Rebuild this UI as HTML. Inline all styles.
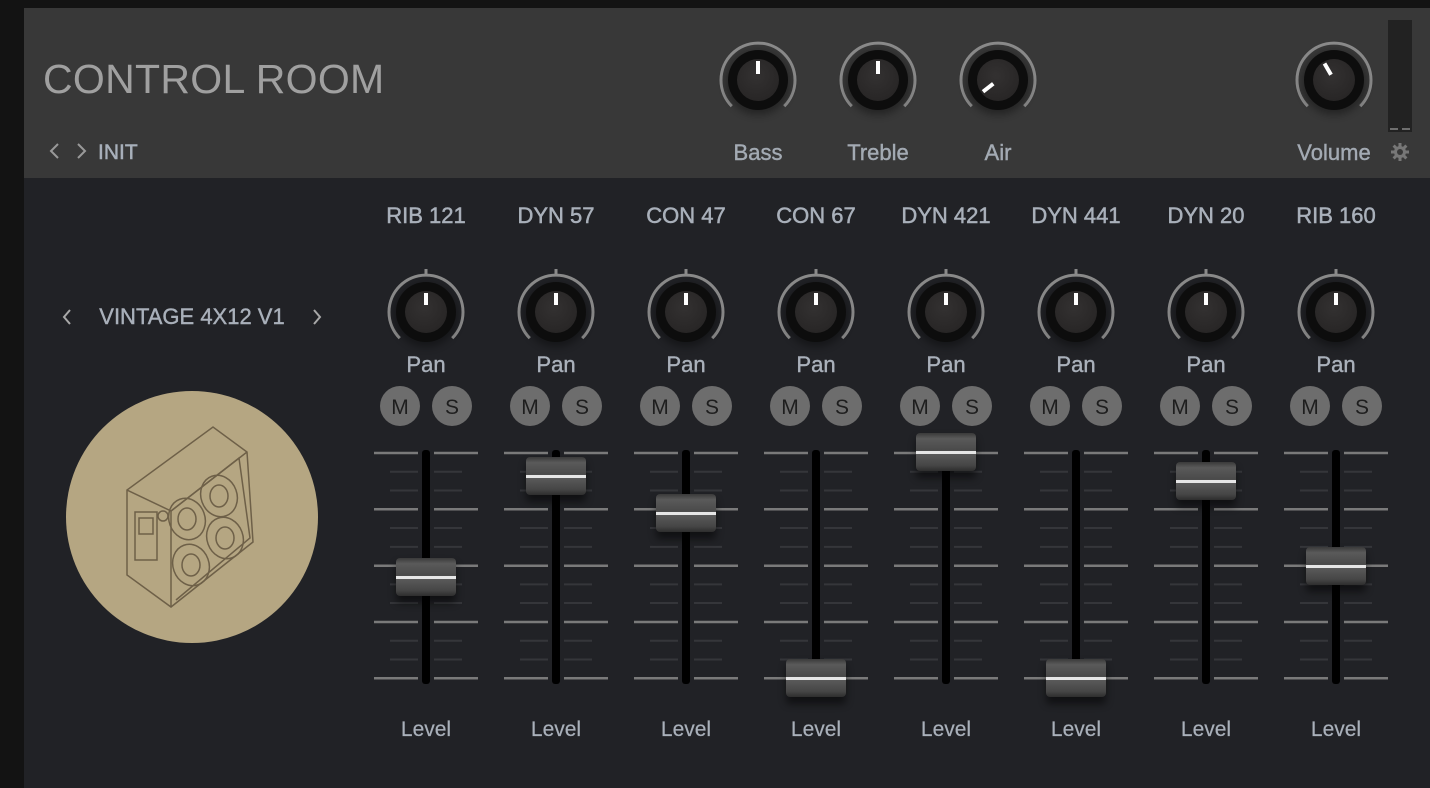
<!DOCTYPE html>
<html><head><meta charset="utf-8"><style>
html,body{margin:0;padding:0;background:#131313;}
body{width:1430px;height:788px;overflow:hidden;position:relative;font-family:"Liberation Sans",sans-serif;}
svg{position:absolute;left:0;top:0;}
</style></head><body>
<svg width="1430" height="788" viewBox="0 0 1430 788" xmlns="http://www.w3.org/2000/svg" font-family="Liberation Sans, sans-serif">
<defs>
<radialGradient id="cap" cx="0.45" cy="0.4" r="0.7"><stop offset="0" stop-color="#333131"/><stop offset="1" stop-color="#262424"/></radialGradient>
<linearGradient id="fc" x1="0" y1="0" x2="0" y2="1"><stop offset="0" stop-color="#3a3a3a"/><stop offset="0.15" stop-color="#5a5a5a"/><stop offset="0.45" stop-color="#4a4a4a"/><stop offset="0.55" stop-color="#5a5a5a"/><stop offset="0.85" stop-color="#464646"/><stop offset="1" stop-color="#2e2e2e"/></linearGradient>
<filter id="sh" x="-50%" y="-50%" width="200%" height="200%"><feGaussianBlur stdDeviation="4"/></filter>
<g id="knob">
<path d="M -26.2 26.2 A 37 37 0 1 1 26.2 26.2" fill="none" stroke="#8a8a8a" stroke-width="3"/>
<circle r="32" fill="#000" opacity="0.35" filter="url(#sh)" cy="3"/>
<circle r="30" fill="#0d0d0d"/>
<circle r="21" fill="url(#cap)"/>
</g>
<g id="pk"><use href="#knob"/><line x1="0" y1="-43" x2="0" y2="-37" stroke="#8a8a8a" stroke-width="3"/><rect x="-2" y="-19" width="4" height="12" fill="#fff"/></g>
<g id="fd">
<g stroke="#7a7a7a" stroke-width="2.5">
<path d="M-52 3H-8M8 3H52M-52 59.3H-8M8 59.3H52M-52 115.7H-8M8 115.7H52M-52 172H-8M8 172H52M-52 228.3H-8M8 228.3H52"/>
</g>
<g stroke="#35363a" stroke-width="2">
<path d="M-36 21.8H-8M8 21.8H36M-36 40.5H-8M8 40.5H36M-36 78H-8M8 78H36M-36 96.9H-8M8 96.9H36M-36 134.4H-8M8 134.4H36M-36 153H-8M8 153H36M-36 190.8H-8M8 190.8H36M-36 209.5H-8M8 209.5H36"/>
</g>
<rect x="-4" y="0" width="8" height="234" rx="3" fill="#000"/>
</g>
<g id="cap2">
<rect x="-30" y="-14" width="60" height="40" rx="4" fill="#000" opacity="0.5" filter="url(#sh)"/>
<rect x="-30" y="-19" width="60" height="38" rx="4" fill="url(#fc)"/>
<rect x="-30" y="-1" width="60" height="3" fill="#e6e6e6"/>
</g>
<g id="ms">
<circle cx="-26" r="20" fill="#6d6d6d"/><circle cx="26" r="20" fill="#6d6d6d"/>
<text x="-26" y="8" text-anchor="middle" font-size="21" fill="#1e1e1e">M</text>
<text x="26" y="8" text-anchor="middle" font-size="21" fill="#1e1e1e">S</text>
</g>
</defs>
<rect x="0" y="0" width="1430" height="788" fill="#131313"/>
<rect x="24" y="8" width="1406" height="170" fill="#383838"/>
<rect x="24" y="178" width="1406" height="610" fill="#212226"/>
<text x="43" y="93" font-size="41" fill="#a0a0a0" letter-spacing="0.3">CONTROL ROOM</text>
<path d="M58 144L51 151L58 158M78 144L85 151L78 158" stroke="#999" stroke-width="2" fill="none"/>
<text x="98" y="159" font-size="21" fill="#a8b0bb" stroke="#a8b0bb" stroke-width="0.5">INIT</text>
<g transform="translate(758,80)"><use href="#knob"/><rect x="-2" y="-19" width="4" height="13" fill="#fff"/></g>
<g transform="translate(878,80)"><use href="#knob"/><rect x="-2" y="-19" width="4" height="13" fill="#fff"/></g>
<g transform="translate(998,80)"><use href="#knob"/><rect x="-2" y="-19" width="4" height="13" fill="#fff" transform="rotate(-128)"/></g>
<g transform="translate(1334,80)"><use href="#knob"/><rect x="-2" y="-19" width="4" height="13" fill="#fff" transform="rotate(-30)"/></g>
<g font-size="22" fill="#a3aab3" stroke="#a3aab3" stroke-width="0.4" text-anchor="middle">
<text x="758" y="160">Bass</text><text x="878" y="160">Treble</text><text x="998" y="160">Air</text><text x="1334" y="160">Volume</text>
</g>
<rect x="1388" y="20" width="24" height="112" fill="#222"/>
<path d="M1390 129H1398M1402 129H1410" stroke="#888" stroke-width="1.5"/>
<g transform="translate(1400,152)" fill="#777"><circle r="6"/><g stroke="#777" stroke-width="3"><path d="M0 -9V9M-9 0H9M-6.4 -6.4L6.4 6.4M-6.4 6.4L6.4 -6.4"/></g><circle r="3" fill="#383838"/></g>

<path d="M70 310L64 317L70 324M314 310L320 317L314 324" stroke="#a8a8a8" stroke-width="2" fill="none"/>
<text x="192" y="324" font-size="22" fill="#a9b0ba" stroke="#a9b0ba" stroke-width="0.4" text-anchor="middle">VINTAGE 4X12 V1</text>
<circle cx="192" cy="517" r="126" fill="#b5a682"/>
<g fill="none" stroke="#6e6048" stroke-width="1.5">
<path d="M127 490L213 427L247 452L253 542L171 607L127 575Z"/>
<path d="M127 490L171 511L247 452M171 511L171 607"/>
<path d="M171 511L239 458L250 538L176 600"/>
<rect x="135" y="512" width="22" height="48"/><rect x="139" y="518" width="14" height="16"/>
<circle cx="163" cy="516" r="5"/>
<ellipse cx="187" cy="519" rx="18" ry="21" transform="rotate(-20 187 519)"/><ellipse cx="187" cy="519" rx="9" ry="11"/>
<ellipse cx="219" cy="496" rx="18" ry="21" transform="rotate(-20 219 496)"/><ellipse cx="219" cy="496" rx="9" ry="11"/>
<ellipse cx="191" cy="565" rx="18" ry="21" transform="rotate(-20 191 565)"/><ellipse cx="191" cy="565" rx="9" ry="11"/>
<ellipse cx="225" cy="538" rx="18" ry="21" transform="rotate(-20 225 538)"/><ellipse cx="225" cy="538" rx="9" ry="11"/>
</g>

<g font-size="22" fill="#a9b0ba" stroke="#a9b0ba" stroke-width="0.5" text-anchor="middle">
<text x="426" y="223">RIB 121</text><text x="556" y="223">DYN 57</text><text x="686" y="223">CON 47</text><text x="816" y="223">CON 67</text><text x="946" y="223">DYN 421</text><text x="1076" y="223">DYN 441</text><text x="1206" y="223">DYN 20</text><text x="1336" y="223">RIB 160</text>
</g>
<g font-size="22" fill="#a9b0ba" stroke="#a9b0ba" stroke-width="0.4" text-anchor="middle">
<text x="426" y="372">Pan</text><text x="556" y="372">Pan</text><text x="686" y="372">Pan</text><text x="816" y="372">Pan</text><text x="946" y="372">Pan</text><text x="1076" y="372">Pan</text><text x="1206" y="372">Pan</text><text x="1336" y="372">Pan</text>
</g>
<g font-size="21" fill="#a9b0ba" stroke="#a9b0ba" stroke-width="0.2" text-anchor="middle">
<text x="426" y="736">Level</text><text x="556" y="736">Level</text><text x="686" y="736">Level</text><text x="816" y="736">Level</text><text x="946" y="736">Level</text><text x="1076" y="736">Level</text><text x="1206" y="736">Level</text><text x="1336" y="736">Level</text>
</g>
<use href="#pk" x="426" y="312"/><use href="#pk" x="556" y="312"/><use href="#pk" x="686" y="312"/><use href="#pk" x="816" y="312"/><use href="#pk" x="946" y="312"/><use href="#pk" x="1076" y="312"/><use href="#pk" x="1206" y="312"/><use href="#pk" x="1336" y="312"/>
<use href="#ms" x="426" y="406"/><use href="#ms" x="556" y="406"/><use href="#ms" x="686" y="406"/><use href="#ms" x="816" y="406"/><use href="#ms" x="946" y="406"/><use href="#ms" x="1076" y="406"/><use href="#ms" x="1206" y="406"/><use href="#ms" x="1336" y="406"/>
<use href="#fd" x="426" y="450"/><use href="#fd" x="556" y="450"/><use href="#fd" x="686" y="450"/><use href="#fd" x="816" y="450"/><use href="#fd" x="946" y="450"/><use href="#fd" x="1076" y="450"/><use href="#fd" x="1206" y="450"/><use href="#fd" x="1336" y="450"/>
<use href="#cap2" x="426" y="577"/><use href="#cap2" x="556" y="476"/><use href="#cap2" x="686" y="513"/><use href="#cap2" x="816" y="678"/><use href="#cap2" x="946" y="452"/><use href="#cap2" x="1076" y="678"/><use href="#cap2" x="1206" y="481"/><use href="#cap2" x="1336" y="566"/>
</svg>
</body></html>
